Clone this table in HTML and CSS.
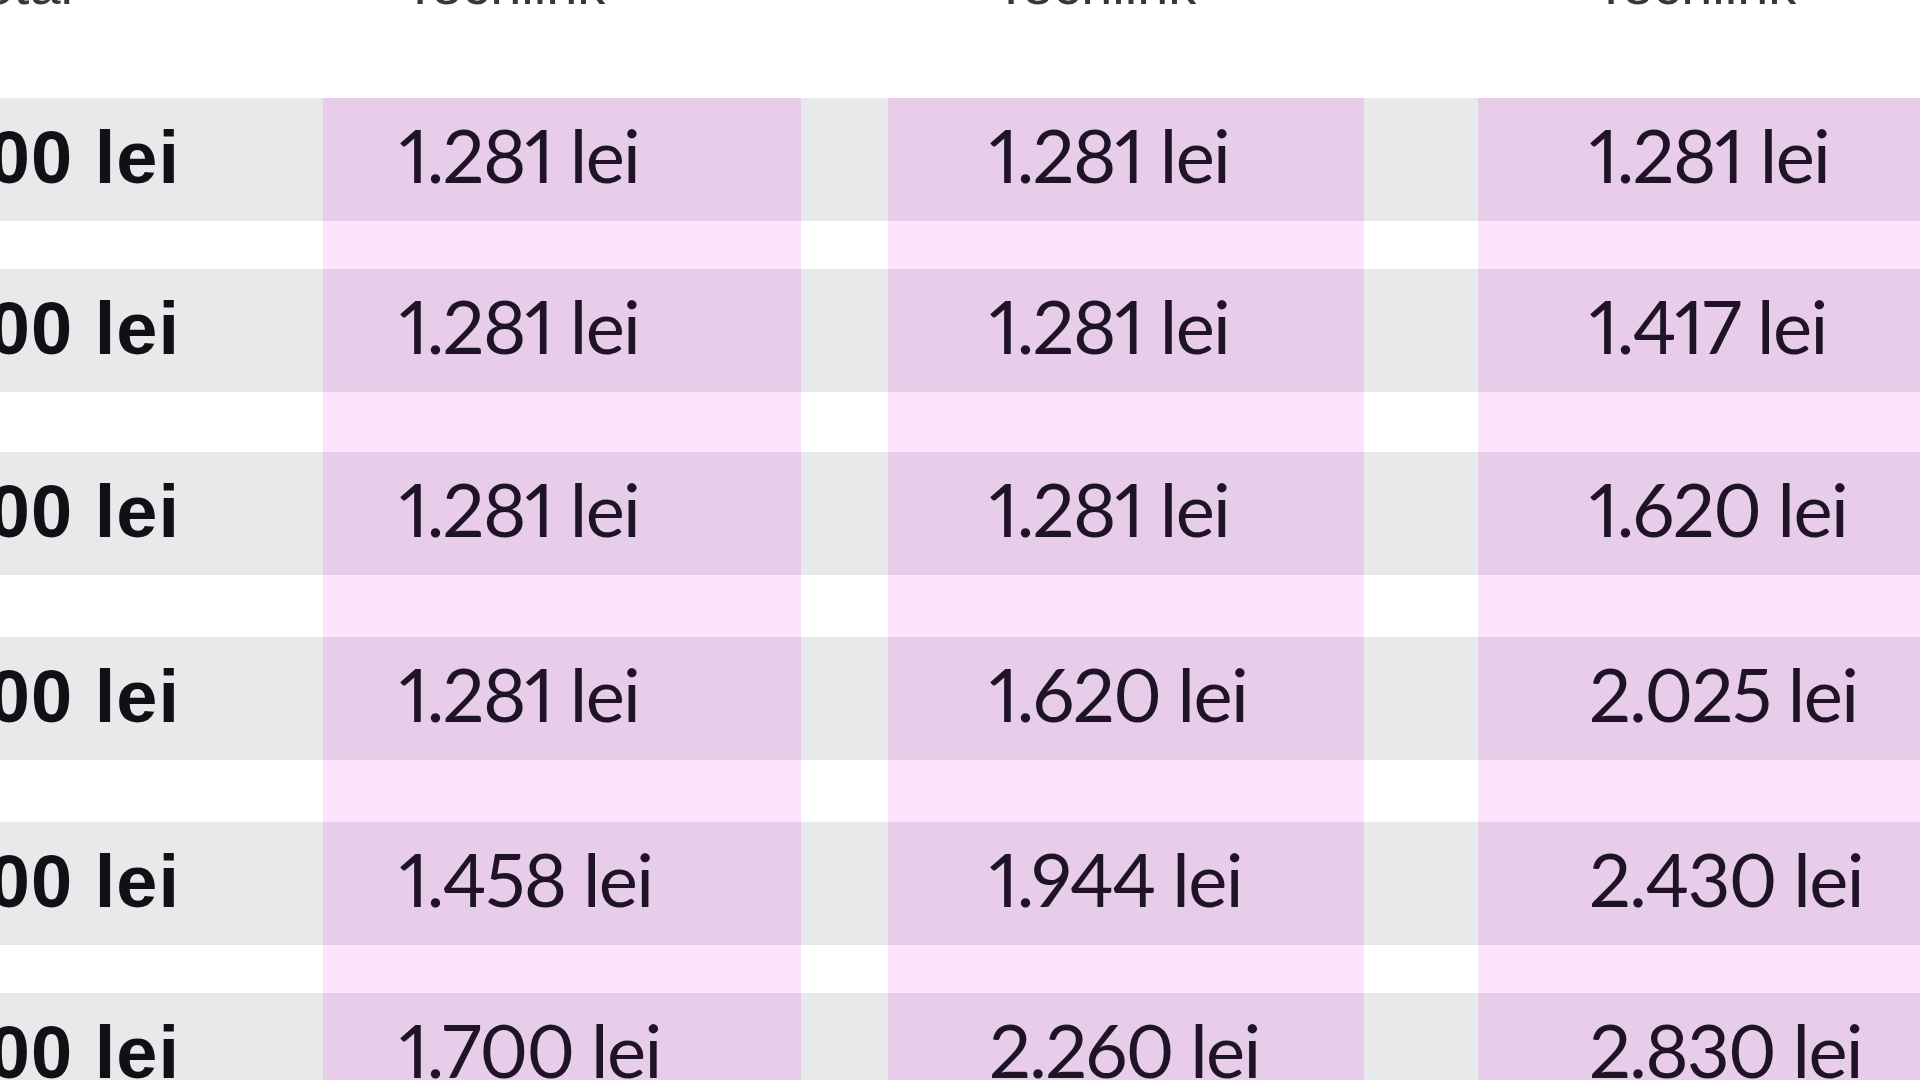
FILE: index.html
```html
<!DOCTYPE html>
<html lang="ro">
<head>
<meta charset="utf-8">
<title>Tabel</title>
<link rel="stylesheet" href="styles.css">
</head>
<body>
<div class="table">
  <div class="row head">
    <div class="cell c0"><span class="htxt">Total</span></div>
    <div class="cell c1"><span class="htxt">Techlink</span></div>
    <div class="cell g1"></div>
    <div class="cell c2"><span class="htxt">Techlink</span></div>
    <div class="cell g2"></div>
    <div class="cell c3"><span class="htxt">Techlink</span></div>
  </div>

  <div class="row data">
    <div class="cell c0 lbl">2.500 lei</div>
    <div class="cell c1 hl val">1.281 lei</div>
    <div class="cell g1"></div>
    <div class="cell c2 hl val">1.281 lei</div>
    <div class="cell g2"></div>
    <div class="cell c3 hl val">1.281 lei</div>
  </div>
  <div class="row sep s-a">
    <div class="cell c0"></div><div class="cell c1 hl"></div><div class="cell g1"></div><div class="cell c2 hl"></div><div class="cell g2"></div><div class="cell c3 hl"></div>
  </div>

  <div class="row data">
    <div class="cell c0 lbl">3.000 lei</div>
    <div class="cell c1 hl val">1.281 lei</div>
    <div class="cell g1"></div>
    <div class="cell c2 hl val">1.281 lei</div>
    <div class="cell g2"></div>
    <div class="cell c3 hl val">1.417 lei</div>
  </div>
  <div class="row sep s-b">
    <div class="cell c0"></div><div class="cell c1 hl"></div><div class="cell g1"></div><div class="cell c2 hl"></div><div class="cell g2"></div><div class="cell c3 hl"></div>
  </div>

  <div class="row data">
    <div class="cell c0 lbl">3.500 lei</div>
    <div class="cell c1 hl val">1.281 lei</div>
    <div class="cell g1"></div>
    <div class="cell c2 hl val">1.281 lei</div>
    <div class="cell g2"></div>
    <div class="cell c3 hl val">1.620 lei</div>
  </div>
  <div class="row sep s-c">
    <div class="cell c0"></div><div class="cell c1 hl"></div><div class="cell g1"></div><div class="cell c2 hl"></div><div class="cell g2"></div><div class="cell c3 hl"></div>
  </div>

  <div class="row data">
    <div class="cell c0 lbl">4.000 lei</div>
    <div class="cell c1 hl val">1.281 lei</div>
    <div class="cell g1"></div>
    <div class="cell c2 hl val">1.620 lei</div>
    <div class="cell g2"></div>
    <div class="cell c3 hl val">2.025 lei</div>
  </div>
  <div class="row sep s-c">
    <div class="cell c0"></div><div class="cell c1 hl"></div><div class="cell g1"></div><div class="cell c2 hl"></div><div class="cell g2"></div><div class="cell c3 hl"></div>
  </div>

  <div class="row data">
    <div class="cell c0 lbl">4.500 lei</div>
    <div class="cell c1 hl val">1.458 lei</div>
    <div class="cell g1"></div>
    <div class="cell c2 hl val">1.944 lei</div>
    <div class="cell g2"></div>
    <div class="cell c3 hl val">2.430 lei</div>
  </div>
  <div class="row sep s-a">
    <div class="cell c0"></div><div class="cell c1 hl"></div><div class="cell g1"></div><div class="cell c2 hl"></div><div class="cell g2"></div><div class="cell c3 hl"></div>
  </div>

  <div class="row data">
    <div class="cell c0 lbl">5.000 lei</div>
    <div class="cell c1 hl val">1.700 lei</div>
    <div class="cell g1"></div>
    <div class="cell c2 hl val">2.260 lei</div>
    <div class="cell g2"></div>
    <div class="cell c3 hl val">2.830 lei</div>
  </div>
</div>
</body>
</html>
```
FILE: styles.css
```css
html, body {
  margin: 0;
  padding: 0;
  height: 100%;
  overflow: hidden;
  background: #ffffff;
}

body {
  font-family: "Liberation Sans", Arial, Helvetica, sans-serif;
  color: #1e1426;
}

.table {
  width: 2120px;
  margin-left: -200px;
  margin-top: -60px;
  display: flex;
  flex-direction: column;
}

.row {
  display: flex;
}

.cell {
  box-sizing: border-box;
  flex: none;
  white-space: nowrap;
}

.c0 { width: 523px; }
.c1 { width: 478px; }
.g1 { width: 87px; }
.c2 { width: 476px; }
.g2 { width: 114px; }
.c3 { width: 442px; }

/* header (mostly scrolled out of view) */
.head {
  height: 158px;
}
.head .cell {
  background: #ffffff;
  padding-top: 15px;
  font-size: 56px;
  line-height: 60px;
  color: #3a3440;
}
.head .c0 { text-align: right; padding-right: 250px; }
.head .c1 { padding-left: 80px; }
.head .c2 { padding-left: 106px; }
.head .c3 { padding-left: 116px; }

/* data rows */
.data {
  height: 123px;
}
.data .cell {
  background: #e8e9eb;
}
.data .hl {
  background: #e7cdea;
}

.val {
  font-family: Lato, "Liberation Sans", Arial, sans-serif;
  font-variant-numeric: proportional-nums;
  font-size: 74px;
  line-height: 74px;
  padding-top: 20px;
  letter-spacing: -1.6px;
}

.lbl {
  font-size: 74px;
  line-height: 74px;
  padding-top: 23px;
  font-weight: 700;
  color: #111014;
  text-align: right;
  padding-right: 143px;
  letter-spacing: 1px;
}

.data .c1 { padding-left: 76px; }
.data .c2 { padding-left: 101px; }
.data .c3 { padding-left: 111px; }

/* separators between rows */
.sep .cell {
  background: #ffffff;
}
.sep .hl {
  background: #fce4fc;
}
.s-a { height: 48px; }
.s-b { height: 60px; }
.s-c { height: 62px; }
```
